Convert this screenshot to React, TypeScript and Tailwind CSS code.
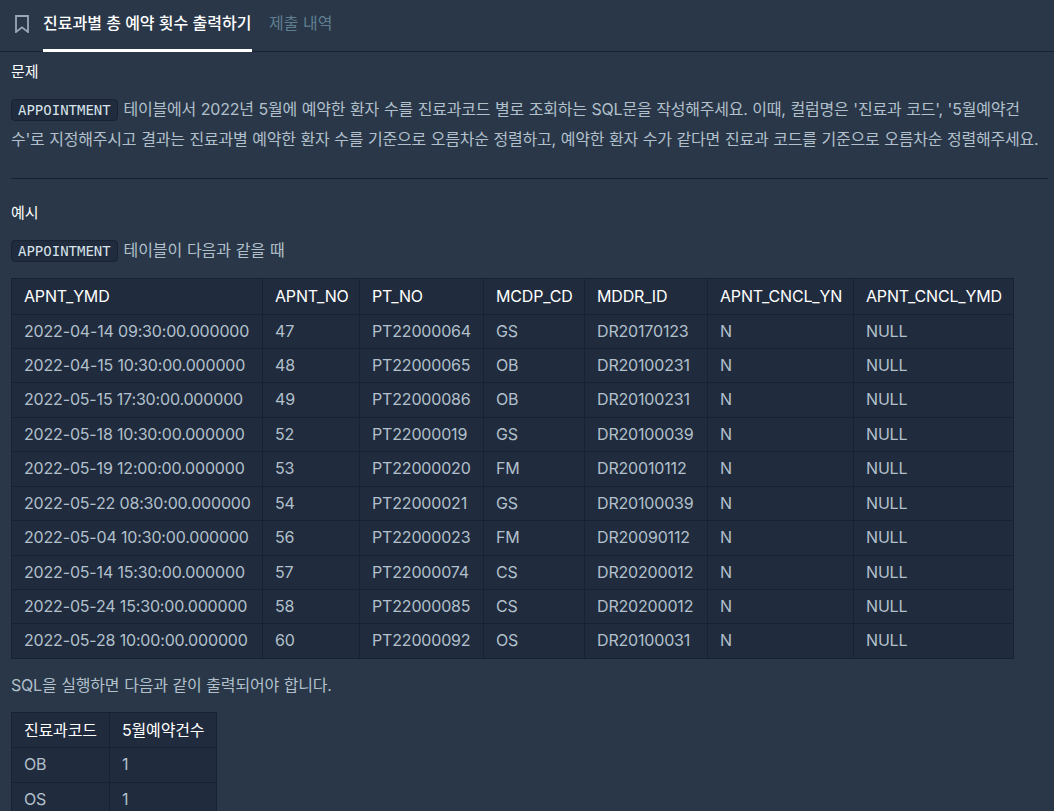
const headers = ["APNT_YMD","APNT_NO","PT_NO","MCDP_CD","MDDR_ID","APNT_CNCL_YN","APNT_CNCL_YMD"];
const widths = ["w-[251px]","w-[97px]","w-[124px]","w-[101px]","w-[123px]","w-[146px]","w-[160px]"];
const rows = [
["2022-04-14 09:30:00.000000","47","PT22000064","GS","DR20170123","N","NULL"],
["2022-04-15 10:30:00.000000","48","PT22000065","OB","DR20100231","N","NULL"],
["2022-05-15 17:30:00.000000","49","PT22000086","OB","DR20100231","N","NULL"],
["2022-05-18 10:30:00.000000","52","PT22000019","GS","DR20100039","N","NULL"],
["2022-05-19 12:00:00.000000","53","PT22000020","FM","DR20010112","N","NULL"],
["2022-05-22 08:30:00.000000","54","PT22000021","GS","DR20100039","N","NULL"],
["2022-05-04 10:30:00.000000","56","PT22000023","FM","DR20090112","N","NULL"],
["2022-05-14 15:30:00.000000","57","PT22000074","CS","DR20200012","N","NULL"],
["2022-05-24 15:30:00.000000","58","PT22000085","CS","DR20200012","N","NULL"],
["2022-05-28 10:00:00.000000","60","PT22000092","OS","DR20100031","N","NULL"],
];
function Code({children}:{children:string}){
  return <code className="mr-[1px] inline-block rounded-[4px] border border-[#172334] bg-[#202b3d] px-[6px] text-[14px] leading-[20px] tracking-normal text-[#d7e2eb] [font-family:'DejaVu_Sans_Mono','Noto_Sans_CJK_KR',monospace] [word-spacing:0]">{children}</code>;
}
function Table({head,body,cols,width}:{head:string[];body:string[][];cols:string[];width:string}){
  return (
    <table className={`${width} table-fixed border-collapse bg-[#202b3d] text-[16px] leading-[24px] tracking-[-0.17px]`}>
      <thead><tr>{head.map((h,i)=><th key={h} className={`${cols[i]} border border-[#172334] px-[12px] pt-[4.75px] pb-[5.75px] text-left font-normal whitespace-nowrap text-white`}>{h}</th>)}</tr></thead>
      <tbody>{body.map((r,i)=><tr key={i}>{r.map((c,j)=><td key={j} className="border border-[#172334] px-[12px] pt-[4px] pb-[5.44px] whitespace-nowrap text-[#b2c0cc]">{c}</td>)}</tr>)}</tbody>
    </table>
  );
}
export default function App(){
  return (
    <div className="h-[811px] w-[1054px] overflow-hidden bg-[#293748] text-[#b2c0cc] [font-family:Inter,'Noto_Sans_CJK_KR',sans-serif]">
      <div className="flex h-[52px] items-stretch border-b border-[#172334]">
        <div className="flex w-[43px] items-start justify-center pt-[15px]">
          <svg width="14" height="18" viewBox="0 0 14 18" fill="none" stroke="#98a8b9" strokeWidth="1.8"><path d="M1 1h12v16l-6-4.6L1 17z"/></svg>
        </div>
        <div className="flex h-[52px] w-[209px] items-start whitespace-nowrap border-b-[3px] border-white pt-[12px] text-[16px] font-medium leading-[22px] text-white">진료과별 총 예약 횟수 출력하기</div>
        <div className="ml-[17px] pt-[12px] text-[16px] leading-[22px] text-[#5f7f90]">제출 내역</div>
      </div>
      <div className="px-[11px]">
        <h6 className="mt-[11px] text-[15px] font-normal leading-[17px] text-white">문제</h6>
        <p className="mt-[14px] w-[1032px] text-[16px] leading-[30px] tracking-[-0.22px] text-[#b2c0cc] [word-spacing:0.5px]">
          <Code>APPOINTMENT</Code> 테이블에서 2022년 5월에 예약한 환자 수를 진료과코드 별로 조회하는 SQL문을 작성해주세요. 이때, 컬럼명은 '진료과 코드', '5월예약건수'로 지정해주시고 결과는 진료과별 예약한 환자 수를 기준으로 오름차순 정렬하고, 예약한 환자 수가 같다면 진료과 코드를 기준으로 오름차순 정렬해주세요.
        </p>
        <hr className="mt-[24px] w-[1037px] border-t border-[#172334]"/>
        <h6 className="mt-[25px] text-[15px] font-normal leading-[17px] text-white">예시</h6>
        <p className="mt-[15px] text-[16px] leading-[28px] tracking-[-0.1px] [word-spacing:0.5px]"><Code>APPOINTMENT</Code> 테이블이 다음과 같을 때</p>
        <div className="mt-[14px]"><Table head={headers} body={rows} cols={widths} width="w-[1003px]"/></div>
        <p className="mt-[12px] text-[16px] leading-[28px] tracking-[-0.2px] [word-spacing:0.5px]">SQL을 실행하면 다음과 같이 출력되어야 합니다.</p>
        <div className="mt-[13px]"><Table head={["진료과코드","5월예약건수"]} body={[["OB","1"],["OS","1"]]} cols={["w-[98px]","w-[107px]"]} width="w-[205px]"/></div>
      </div>
    </div>
  );
}
